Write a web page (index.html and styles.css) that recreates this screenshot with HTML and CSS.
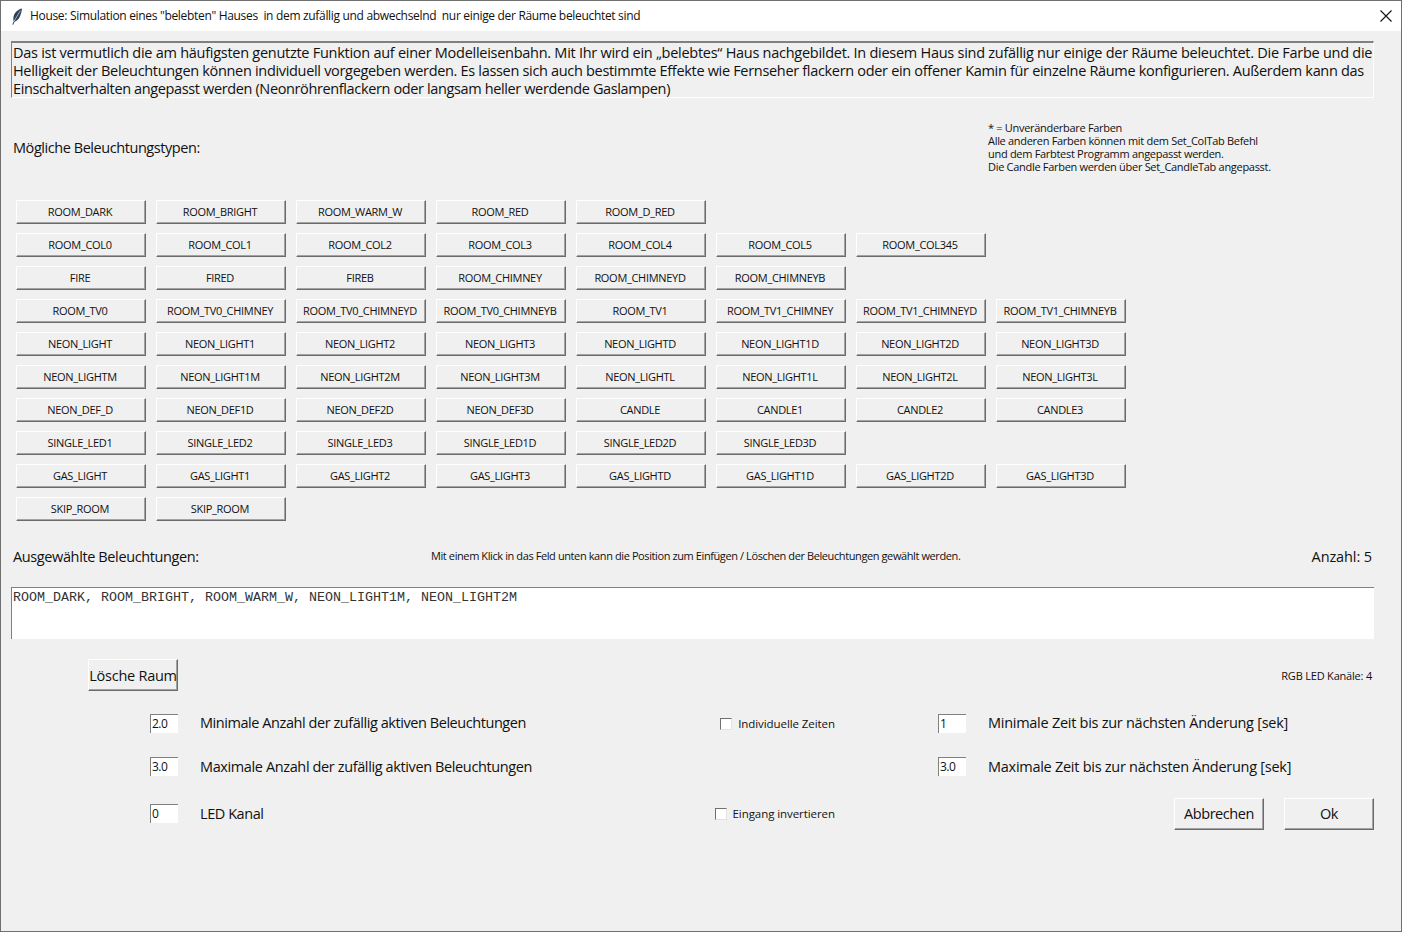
FILE: index.html
```html
<!DOCTYPE html>
<html lang="de">
<head>
    <meta charset="UTF-8">
    <meta name="viewport" content="width=device-width, initial-scale=1.0">
    <title>House</title>
    <link rel="stylesheet" href="styles.css">
</head>
<body>
    <div class="window">
        <div class="title-bar">
            <svg class="feather" width="12" height="17" viewBox="0 0 12 17">
                <path d="M10.8 0.6C7.4 1.2 3.6 4.4 2.6 8.6C2.1 10.8 2.3 12.4 2.8 13.2L1.3 16.4L2.2 16.7L3.7 13.5C5.8 13.2 7.8 11 9 8.2C10.2 5.4 11 2.8 10.8 0.6Z" fill="#2b3f57"/>
                <path d="M9.4 2.6L3.2 13" stroke="#dfe6ee" stroke-width="0.7" fill="none"/>
            </svg>
            <span class="title-text">House: Simulation eines "belebten" Hauses&nbsp; in dem zufällig und abwechselnd&nbsp; nur einige der Räume beleuchtet sind</span>
            <svg class="close" width="12" height="12" viewBox="0 0 12 12">
                <path d="M0.5 0.5L11.5 11.5M11.5 0.5L0.5 11.5" stroke="#111" stroke-width="1.1" fill="none"/>
            </svg>
        </div>

        <div class="content">
            <div class="description">
                <div class="line-one">Das ist vermutlich die am häufigsten genutzte Funktion auf einer Modelleisenbahn. Mit Ihr wird ein „belebtes“ Haus nachgebildet. In diesem Haus sind zufällig nur einige der Räume beleuchtet. Die Farbe und die</div>
                <div class="line-two">Helligkeit der Beleuchtungen können individuell vorgegeben werden. Es lassen sich auch bestimmte Effekte wie Fernseher flackern oder ein offener Kamin für einzelne Räume konfigurieren. Außerdem kann das</div>
                <div>Einschaltverhalten angepasst werden (Neonröhrenflackern oder langsam heller werdende Gaslampen)</div>
            </div>

            <div class="types-head">
                <div class="big-label">Mögliche Beleuchtungstypen:</div>
                <div class="note">
                    * = Unveränderbare Farben<br>
                    Alle anderen Farben können mit dem Set_ColTab Befehl<br>
                    und dem Farbtest Programm angepasst werden.<br>
                    Die Candle Farben werden über Set_CandleTab angepasst.
                </div>
            </div>

            <div class="button-rows">
                <div class="button-row">
                    <button class="type-btn">ROOM_DARK</button>
                    <button class="type-btn">ROOM_BRIGHT</button>
                    <button class="type-btn">ROOM_WARM_W</button>
                    <button class="type-btn">ROOM_RED</button>
                    <button class="type-btn">ROOM_D_RED</button>
                </div>
                <div class="button-row">
                    <button class="type-btn">ROOM_COL0</button>
                    <button class="type-btn">ROOM_COL1</button>
                    <button class="type-btn">ROOM_COL2</button>
                    <button class="type-btn">ROOM_COL3</button>
                    <button class="type-btn">ROOM_COL4</button>
                    <button class="type-btn">ROOM_COL5</button>
                    <button class="type-btn">ROOM_COL345</button>
                </div>
                <div class="button-row">
                    <button class="type-btn">FIRE</button>
                    <button class="type-btn">FIRED</button>
                    <button class="type-btn">FIREB</button>
                    <button class="type-btn">ROOM_CHIMNEY</button>
                    <button class="type-btn">ROOM_CHIMNEYD</button>
                    <button class="type-btn">ROOM_CHIMNEYB</button>
                </div>
                <div class="button-row">
                    <button class="type-btn">ROOM_TV0</button>
                    <button class="type-btn">ROOM_TV0_CHIMNEY</button>
                    <button class="type-btn">ROOM_TV0_CHIMNEYD</button>
                    <button class="type-btn">ROOM_TV0_CHIMNEYB</button>
                    <button class="type-btn">ROOM_TV1</button>
                    <button class="type-btn">ROOM_TV1_CHIMNEY</button>
                    <button class="type-btn">ROOM_TV1_CHIMNEYD</button>
                    <button class="type-btn">ROOM_TV1_CHIMNEYB</button>
                </div>
                <div class="button-row">
                    <button class="type-btn">NEON_LIGHT</button>
                    <button class="type-btn">NEON_LIGHT1</button>
                    <button class="type-btn">NEON_LIGHT2</button>
                    <button class="type-btn">NEON_LIGHT3</button>
                    <button class="type-btn">NEON_LIGHTD</button>
                    <button class="type-btn">NEON_LIGHT1D</button>
                    <button class="type-btn">NEON_LIGHT2D</button>
                    <button class="type-btn">NEON_LIGHT3D</button>
                </div>
                <div class="button-row">
                    <button class="type-btn">NEON_LIGHTM</button>
                    <button class="type-btn">NEON_LIGHT1M</button>
                    <button class="type-btn">NEON_LIGHT2M</button>
                    <button class="type-btn">NEON_LIGHT3M</button>
                    <button class="type-btn">NEON_LIGHTL</button>
                    <button class="type-btn">NEON_LIGHT1L</button>
                    <button class="type-btn">NEON_LIGHT2L</button>
                    <button class="type-btn">NEON_LIGHT3L</button>
                </div>
                <div class="button-row">
                    <button class="type-btn">NEON_DEF_D</button>
                    <button class="type-btn">NEON_DEF1D</button>
                    <button class="type-btn">NEON_DEF2D</button>
                    <button class="type-btn">NEON_DEF3D</button>
                    <button class="type-btn">CANDLE</button>
                    <button class="type-btn">CANDLE1</button>
                    <button class="type-btn">CANDLE2</button>
                    <button class="type-btn">CANDLE3</button>
                </div>
                <div class="button-row">
                    <button class="type-btn">SINGLE_LED1</button>
                    <button class="type-btn">SINGLE_LED2</button>
                    <button class="type-btn">SINGLE_LED3</button>
                    <button class="type-btn">SINGLE_LED1D</button>
                    <button class="type-btn">SINGLE_LED2D</button>
                    <button class="type-btn">SINGLE_LED3D</button>
                </div>
                <div class="button-row">
                    <button class="type-btn">GAS_LIGHT</button>
                    <button class="type-btn">GAS_LIGHT1</button>
                    <button class="type-btn">GAS_LIGHT2</button>
                    <button class="type-btn">GAS_LIGHT3</button>
                    <button class="type-btn">GAS_LIGHTD</button>
                    <button class="type-btn">GAS_LIGHT1D</button>
                    <button class="type-btn">GAS_LIGHT2D</button>
                    <button class="type-btn">GAS_LIGHT3D</button>
                </div>
                <div class="button-row">
                    <button class="type-btn">SKIP_ROOM</button>
                    <button class="type-btn">SKIP_ROOM</button>
                </div>
            </div>

            <div class="selected-head">
                <div class="big-label selected-label">Ausgewählte Beleuchtungen:</div>
                <div class="hint">Mit einem Klick in das Feld unten kann die Position zum Einfügen / Löschen der Beleuchtungen gewählt werden.</div>
                <div class="big-label count">Anzahl: 5</div>
            </div>

            <div class="selected-box">ROOM_DARK, ROOM_BRIGHT, ROOM_WARM_W, NEON_LIGHT1M, NEON_LIGHT2M</div>

            <div class="delete-row">
                <button class="big-btn delete-btn">Lösche Raum</button>
                <div class="channels">RGB LED Kanäle: 4</div>
            </div>

            <div class="settings">
                <input class="num-input" type="text" value="2.0">
                <div class="big-label label-up">Minimale Anzahl der zufällig aktiven Beleuchtungen</div>
                <label class="check"><span class="check-box"></span>Individuelle Zeiten</label>
                <input class="num-input num-right" type="text" value="1">
                <div class="big-label label-up label-time">Minimale Zeit bis zur nächsten Änderung [sek]</div>

                <input class="num-input" type="text" value="3.0">
                <div class="big-label label-max">Maximale Anzahl der zufällig aktiven Beleuchtungen</div>
                <div></div>
                <input class="num-input num-right" type="text" value="3.0">
                <div class="big-label label-time">Maximale Zeit bis zur nächsten Änderung [sek]</div>

                <input class="num-input" type="text" value="0">
                <div class="big-label">LED Kanal</div>
                <label class="check"><span class="check-box"></span>Eingang invertieren</label>
                <div class="actions">
                    <button class="big-btn">Abbrechen</button>
                    <button class="big-btn">Ok</button>
                </div>
            </div>
        </div>
    </div>
</body>
</html>
```

FILE: styles.css
```css
* {
    box-sizing: border-box;
}
html, body {
    margin: 0;
    padding: 0;
}
body {
    width: 1402px;
    height: 932px;
    overflow: hidden;
    font-family: "Open Sans", "Noto Sans", sans-serif;
    color: #111;
}
.window {
    width: 1402px;
    height: 932px;
    background-color: #f0f0f0;
    border: 1px solid #6f6f6f;
}
.title-bar {
    display: flex;
    align-items: center;
    height: 30px;
    background-color: #fff;
    padding-left: 10px;
    padding-right: 9px;
}
.feather {
    flex: none;
}
.title-text {
    margin-left: 7px;
    margin-bottom: 1px;
    font-size: 12px;
    letter-spacing: -0.32px;
    white-space: nowrap;
}
.close {
    margin-left: auto;
}
.content {
    padding: 10px 27px 0 10px;
}
.description {
    width: 1363px;
    height: 57px;
    border: 1px solid;
    border-top: 2px solid #808080;
    border-left: 1px solid #808080;
    border-right-color: #fff;
    border-bottom-color: #fff;
    padding: 1px 0 0 1px;
    font-size: 14.5px;
    line-height: 18px;
    letter-spacing: -0.37px;
    white-space: nowrap;
}
.line-one {
    letter-spacing: -0.27px;
}
.line-two {
    letter-spacing: -0.316px;
}
.big-label {
    font-size: 14.5px;
    letter-spacing: -0.44px;
    white-space: nowrap;
}
.types-head {
    display: flex;
    align-items: center;
    justify-content: space-between;
    height: 52px;
    margin-top: 23px;
    padding-left: 2px;
}
.note {
    width: 386px;
    font-size: 11px;
    line-height: 13px;
    letter-spacing: -0.3px;
    white-space: nowrap;
}
.button-rows {
    display: flex;
    flex-direction: column;
    gap: 9px;
    margin-top: 27px;
    padding-left: 5px;
}
.button-row {
    display: flex;
    gap: 10px;
}
.type-btn {
    width: 130px;
    height: 24px;
    padding: 0 2px 2px 0;
    background-color: #f0f0f0;
    border: 1px solid;
    border-color: #fff #6b6b6b #6b6b6b #fff;
    box-shadow: inset -1px -1px 0 #a3a3a3;
    font-family: inherit;
    font-size: 11px;
    letter-spacing: -0.3px;
    color: #111;
    white-space: nowrap;
}
.selected-head {
    display: flex;
    align-items: center;
    height: 24px;
    margin-top: 23px;
    padding-left: 2px;
}
.selected-label {
    width: 418px;
    flex: none;
    letter-spacing: -0.38px;
}
.hint {
    margin-bottom: 2px;
    font-size: 11px;
    letter-spacing: -0.4px;
    white-space: nowrap;
}
.count {
    margin-left: auto;
    margin-right: 2px;
    letter-spacing: -0.1px;
}
.selected-box {
    width: 1363px;
    height: 52px;
    margin-top: 19px;
    background-color: #fff;
    border-top: 1px solid #808080;
    border-left: 1px solid #808080;
    padding: 2px 0 0 1px;
    font-family: "Liberation Mono", monospace;
    font-size: 13.33px;
    line-height: 15px;
    color: #333;
}
.delete-row {
    display: flex;
    align-items: center;
    justify-content: space-between;
    margin-top: 20px;
    padding-left: 77px;
}
.big-btn {
    width: 90px;
    height: 32px;
    padding: 0;
    background-color: #f0f0f0;
    border: 1px solid;
    border-color: #fff #6b6b6b #6b6b6b #fff;
    box-shadow: inset -1px -1px 0 #a3a3a3;
    font-family: inherit;
    font-size: 14.5px;
    letter-spacing: -0.44px;
    color: #111;
    white-space: nowrap;
}
.delete-btn {
    letter-spacing: -0.25px;
}
.channels {
    margin-right: 2px;
    font-size: 11px;
    letter-spacing: -0.2px;
    white-space: nowrap;
}
.settings {
    display: grid;
    grid-template-columns: 28px 522px 135px 131px 408px;
    grid-template-rows: 45px 41px 53px;
    align-items: center;
    margin-top: 10px;
    padding-left: 139px;
}
.settings .big-label {
    padding-left: 22px;
}
.settings .label-up {
    margin-bottom: 2px;
}
.settings .label-time {
    letter-spacing: -0.27px;
}
.settings .label-max {
    letter-spacing: -0.38px;
}
.num-input {
    width: 28px;
    height: 19px;
    padding: 0 0 2px 1px;
    background-color: #fff;
    border: none;
    border-top: 1px solid #808080;
    border-left: 1px solid #808080;
    font-family: inherit;
    font-size: 12px;
    letter-spacing: -0.5px;
    color: #111;
}
.num-right {
    justify-self: end;
}
.check {
    display: flex;
    align-items: center;
    justify-content: flex-end;
    gap: 6px;
    font-size: 11.5px;
    letter-spacing: -0.07px;
    white-space: nowrap;
}
.check-box {
    width: 12px;
    height: 12px;
    background-color: #fff;
    border-top: 1px solid #707070;
    border-left: 1px solid #707070;
    border-right: 1px solid #e3e3e3;
    border-bottom: 1px solid #e3e3e3;
}
.actions {
    grid-column: 4 / 6;
    display: flex;
    justify-content: flex-end;
    gap: 20px;
}
```
